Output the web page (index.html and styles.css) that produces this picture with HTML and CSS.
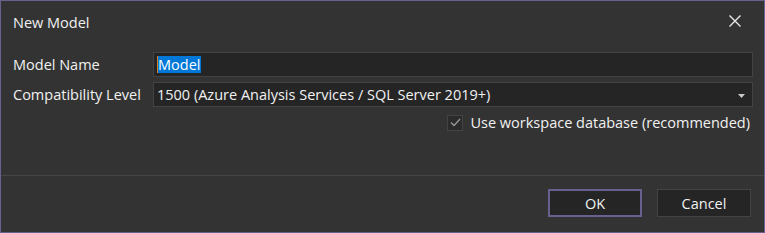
FILE: index.html
```html
<!DOCTYPE html>
<html lang="en">
<head>
<meta charset="UTF-8">
<title>New Model</title>
<link rel="stylesheet" href="styles.css">
</head>
<body>

<div class="dialog">
  <div class="titlebar">
    <span class="title">New Model</span>
    <svg class="close" width="14" height="14" viewBox="0 0 14 14">
      <path d="M1.5 1.5 L12.5 12.5 M12.5 1.5 L1.5 12.5" stroke="#e8e8e8" stroke-width="1.4" fill="none"/>
    </svg>
  </div>

  <div class="content">
    <div class="row">
      <label class="label">Model Name</label>
      <div class="field">
        <span class="caret"></span><span class="selected">Model</span>
      </div>
    </div>
    <div class="row">
      <label class="label">Compatibility Level</label>
      <div class="field combo">
        <span>1500 (Azure Analysis Services / SQL Server 2019+)</span>
        <svg class="arrow" width="7" height="4" viewBox="0 0 7 4">
          <path d="M0 0 H7 L3.5 4 Z" fill="#c8c8c8"/>
        </svg>
      </div>
    </div>
    <div class="check-row">
      <span class="checkbox">
        <svg width="11" height="9" viewBox="0 0 11 9">
          <path d="M1 4.5 L4 7.5 L10 1" stroke="#9a9a9a" stroke-width="1.3" fill="none"/>
        </svg>
      </span>
      <span>Use workspace database (recommended)</span>
    </div>
  </div>

  <div class="footer">
    <button class="btn btn-default">OK</button>
    <button class="btn">Cancel</button>
  </div>
</div>

</body>
</html>
```

FILE: styles.css
```css
* {
  box-sizing: border-box;
}
body {
  margin: 0;
  background: #333333;
  font-family: "Open Sans", "Noto Sans", sans-serif;
  font-size: 14.5px;
  color: #f1f1f1;
}
.dialog {
  width: 765px;
  height: 233px;
  border: 1px solid #6a6090;
  background: #333333;
  display: flex;
  flex-direction: column;
}
.titlebar {
  height: 42px;
  display: flex;
  align-items: center;
  justify-content: space-between;
  padding: 0 22px 0 12px;
}
.title {
  font-size: 14.5px;
}
.close {
  margin-top: -2px;
}
.content {
  padding: 9px 11px 0 12px;
  display: flex;
  flex-direction: column;
  gap: 5px;
  flex: 1;
}
.row {
  display: flex;
  align-items: center;
}
.label {
  width: 140px;
  flex-shrink: 0;
}
.field {
  flex: 1;
  height: 25px;
  background: #252526;
  border: 1px solid #434346;
  display: flex;
  align-items: center;
  padding: 0 3px;
}
.caret {
  width: 1px;
  height: 17px;
  background: #e07a1f;
}
.selected {
  background: #0078d7;
  color: #ffffff;
  line-height: 17px;
  padding-right: 1px;
}
.combo {
  justify-content: space-between;
  padding: 0 7px 0 3px;
}
.arrow {
  margin-top: 2px;
}
.check-row {
  display: flex;
  align-items: center;
  justify-content: flex-end;
  gap: 7px;
  padding-right: 3px;
  margin-top: 1px;
}
.checkbox {
  width: 16px;
  height: 16px;
  border: 1px solid #434346;
  background: #2b2b2b;
  display: flex;
  align-items: center;
  justify-content: center;
}
.footer {
  height: 57px;
  border-top: 1px solid #464646;
  display: flex;
  justify-content: flex-end;
  align-items: flex-start;
  gap: 15px;
  padding: 13px 13px 0 0;
}
.btn {
  width: 94px;
  height: 28px;
  background: #252526;
  border: 1px solid #434346;
  color: #f1f1f1;
  font-family: inherit;
  font-size: 14.5px;
}
.btn-default {
  border: 2px solid #6a6090;
}
```
